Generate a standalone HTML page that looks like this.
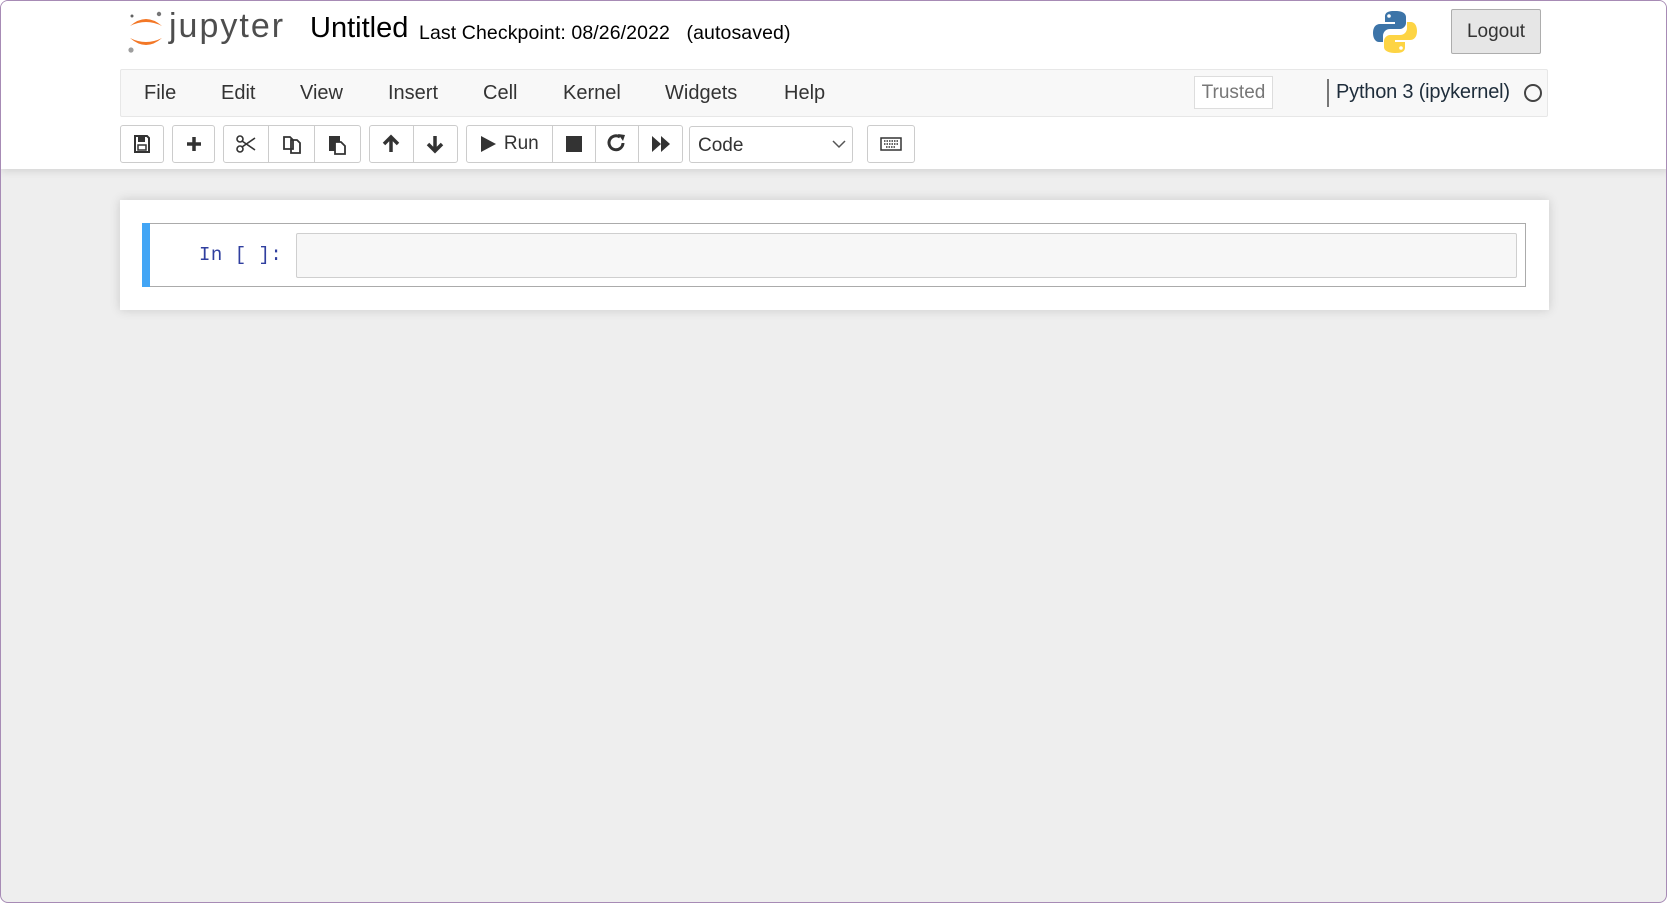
<!DOCTYPE html>
<html><head><meta charset="utf-8"><style>
*{box-sizing:border-box;margin:0;padding:0}
body{width:1667px;height:903px;background:#fff;font-family:"Liberation Sans",sans-serif;overflow:hidden;position:relative}
.frame{position:absolute;left:0;top:0;width:1667px;height:903px;border:1px solid #a78bb5;border-radius:8px;background:#eee;overflow:hidden}
.hdr{position:absolute;left:0;top:0;width:1667px;height:168px;background:#fff;box-shadow:0 2px 8px rgba(0,0,0,.12)}
.abs{position:absolute}
.menubar{left:119px;top:68px;width:1428px;height:48px;background:#f8f8f8;border:1px solid #e7e7e7;border-radius:2px}
.mi{position:absolute;top:12px;font-size:20px;color:#333}
.btn{position:absolute;top:124px;height:38px;border:1px solid #ccc;background:#fff;border-radius:3px}
.grp{position:absolute;top:124px;height:38px;border:1px solid #ccc;background:#fff;border-radius:3px;display:flex}
.grp>div{border-right:1px solid #ccc;height:100%;display:flex;align-items:center;justify-content:center}
.grp>div:last-child{border-right:none}
.ic{display:flex;align-items:center;justify-content:center}
</style></head><body><div class="frame">
<div class="hdr">
 <svg class="abs" style="left:125px;top:9px" width="40" height="44" viewBox="0 0 40 44">
  <path d="M4 16 Q20 2 36 16 Q20 8 4 16Z" fill="#f37726"/>
  <path d="M4 28 Q20 42 36 28 Q20 36 4 28Z" fill="#f37726"/>
  <circle cx="33" cy="4" r="2.2" fill="#767677"/><circle cx="5" cy="40" r="2.6" fill="#9e9e9e"/><circle cx="6" cy="6" r="1.5" fill="#616262"/>
 </svg>
 <div class="abs" style="left:168px;top:6px;font-size:34px;color:#4e4e4e;letter-spacing:2px">jupyter</div>
 <div class="abs" style="left:309px;top:11px;font-size:29px;color:#000">Untitled</div>
 <div class="abs" style="left:418px;top:21px;font-size:19.5px;color:#000;letter-spacing:0.1px">Last Checkpoint: 08/26/2022&nbsp;&nbsp;&nbsp;(autosaved)</div>
 <svg class="abs" style="left:1372px;top:9px" width="44" height="44" viewBox="0 0 44 44">
  <path d="M21 1c-9 0-9 4-9 6v5h10v2H7c-4 0-7 3-7 9s3 9 6 9h4v-6c0-4 3-7 7-7h10c3 0 6-3 6-6V7c0-3-3-6-10-6z" fill="#3c74a8"/>
  <circle cx="16" cy="6" r="1.8" fill="#fff"/>
  <path d="M23 43c9 0 9-4 9-6v-5H22v-2h15c4 0 7-3 7-9s-3-9-6-9h-4v6c0 4-3 7-7 7H17c-3 0-6 3-6 6v6c0 3 3 6 12 6z" fill="#fdd444"/>
  <circle cx="28" cy="38" r="1.8" fill="#fff"/>
 </svg>
 <div class="abs" style="left:1450px;top:8px;width:90px;height:45px;background:#e6e6e6;border:1px solid #adadad;border-radius:2px;font-size:19px;color:#333;text-align:center;line-height:43px">Logout</div>
 <div class="abs menubar">
  <span class="mi" style="left:23px">File</span><span class="mi" style="left:100px">Edit</span><span class="mi" style="left:179px">View</span><span class="mi" style="left:267px">Insert</span><span class="mi" style="left:362px">Cell</span><span class="mi" style="left:442px">Kernel</span><span class="mi" style="left:544px">Widgets</span><span class="mi" style="left:663px">Help</span>
  <div class="abs" style="left:1073px;top:6px;width:79px;height:33px;border:1px solid #ddd;background:#fff;color:#777;font-size:19px;text-align:center;line-height:31px">Trusted</div>
  <div class="abs" style="left:1206px;top:9px;width:2px;height:28px;background:#777"></div>
  <div class="abs" style="left:1215px;top:11px;font-size:20px;color:#1e2d3b;letter-spacing:-0.2px">Python 3 (ipykernel)</div>
  <div class="abs" style="left:1403px;top:14px;width:18px;height:18px;border:2.5px solid #444;border-radius:50%"></div>
 </div>
 <div class="btn ic" style="left:119px;width:44px"><svg width="18" height="20" viewBox="0 0 18 20"><path d="M2 2h12l2 2v14H2z" fill="none" stroke="#333" stroke-width="2"/><rect x="5" y="3" width="7" height="5" fill="#333"/><rect x="5" y="11" width="8" height="5" fill="none" stroke="#333" stroke-width="1.5"/></svg></div>
 <div class="btn ic" style="left:171px;width:43px"><svg width="16" height="16"><path d="M8 1v14M1 8h14" stroke="#333" stroke-width="3.5"/></svg></div>
 <div class="grp" style="left:222px;width:138px"><div style="width:46px"><svg width="20" height="18" viewBox="0 0 20 18"><circle cx="4" cy="4" r="3" fill="none" stroke="#333" stroke-width="1.6"/><circle cx="4" cy="14" r="3" fill="none" stroke="#333" stroke-width="1.6"/><path d="M6 6L19 15M6 12L19 3" stroke="#333" stroke-width="1.6"/></svg></div><div style="width:46px"><svg width="20" height="22" viewBox="0 0 20 22"><path d="M2 4h6l3 3v9H2z M9 7h6l3 3v10H9z" fill="#fff" stroke="#333" stroke-width="1.8"/></svg></div><div style="width:46px"><svg width="20" height="22" viewBox="0 0 20 22"><rect x="2" y="3" width="11" height="15" fill="#333"/><path d="M8 9h6l4 4v8H8z" fill="#fff" stroke="#333" stroke-width="1.8"/></svg></div></div>
 <div class="grp" style="left:368px;width:89px"><div style="width:44px"><svg width="18" height="20"><path d="M9 18V3M2 10l7-7 7 7" fill="none" stroke="#333" stroke-width="3.5"/></svg></div><div style="width:44px"><svg width="18" height="20"><path d="M9 2v15M2 10l7 7 7-7" fill="none" stroke="#333" stroke-width="3.5"/></svg></div></div>
 <div class="grp" style="left:465px;width:217px"><div style="width:86px;font-size:19px;color:#333;gap:8px"><svg width="16" height="18"><path d="M1 1l15 8-15 8z" fill="#333"/></svg>Run</div><div style="width:44px"><div style="width:16px;height:16px;background:#333"></div></div><div style="width:43px"><svg width="20" height="20" viewBox="0 0 20 20"><path d="M16 9a7 7 0 1 1-3-6" fill="none" stroke="#333" stroke-width="3"/><path d="M11 0l7 1-2 6z" fill="#333"/></svg></div><div style="width:43px"><svg width="20" height="18"><path d="M1 1l9 8-9 8zM10 1l9 8-9 8z" fill="#333"/></svg></div></div>
 <div class="abs" style="left:688px;top:125px;width:164px;height:37px;border:1px solid #ccc;background:#fff;border-radius:3px;font-size:19px;color:#333;padding:8px 0 0 8px">Code<svg class="abs" style="left:142px;top:12px" width="14" height="10"><path d="M1 2l6 6 6-6" fill="none" stroke="#555" stroke-width="1.5"/></svg></div>
 <div class="btn ic" style="left:866px;width:48px"><svg width="22" height="14"><rect x="1" y="1" width="20" height="12" fill="none" stroke="#333" stroke-width="1.5"/><path d="M4 4h14M4 7h14M6 10h10" stroke="#333" stroke-width="1.5" stroke-dasharray="1.5 1"/></svg></div>
</div>
<div class="abs" style="left:119px;top:199px;width:1429px;height:110px;background:#fff;box-shadow:0 0 10px rgba(0,0,0,.15)"></div>
<div class="abs" style="left:141px;top:222px;width:1384px;height:64px;border:1px solid #ababab;border-left:none"></div>
<div class="abs" style="left:141px;top:222px;width:8px;height:64px;background:#42a5f5"></div>
<div class="abs" style="left:198px;top:243px;font-family:'Liberation Mono',monospace;font-size:19px;color:#303f9f;letter-spacing:0.5px">In&nbsp;[&nbsp;]:</div>
<div class="abs" style="left:295px;top:232px;width:1221px;height:45px;background:#f7f7f7;border:1px solid #cfcfcf;border-radius:2px"></div>
</div></body></html>
